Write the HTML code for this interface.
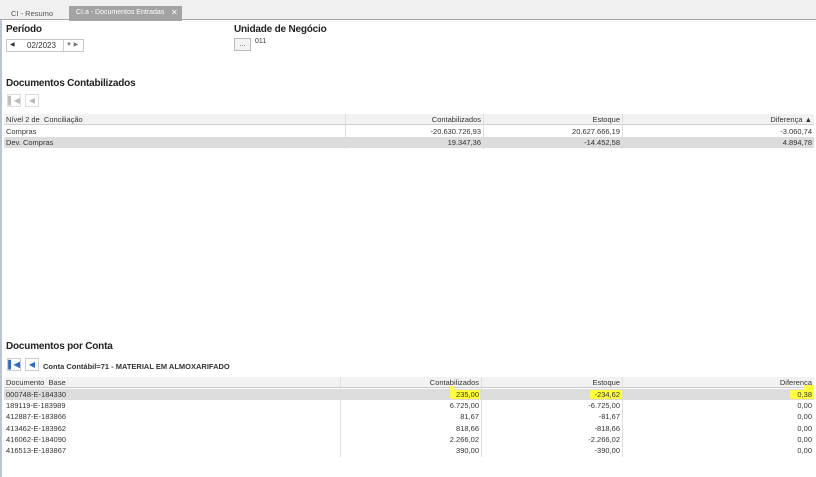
<!DOCTYPE html>
<html><head><style>
*{margin:0;padding:0;box-sizing:border-box}
body{width:816px;height:477px;background:#fff;font-family:"Liberation Sans",sans-serif;position:relative;overflow:hidden;color:#333}
.a{position:absolute}
.tabbar{left:0;top:0;width:816px;height:20px;background:#f0f0f0;border-bottom:1px solid #a8a8a8}
.t{font-size:8px;white-space:nowrap}
.h{font-size:10px;font-weight:bold;color:#222;letter-spacing:-0.2px}
.g{font-size:7.5px;color:#333;white-space:nowrap}
.row{position:absolute;height:11px;line-height:11px}
.r{text-align:right;position:absolute}
.hl{background:#ffff3a}
</style></head><body>
<div class="a tabbar"></div>
<div class="a t" style="left:11px;top:9px;color:#555;font-size:7.5px">CI - Resumo</div>
<div class="a" style="left:69px;top:6px;width:113px;height:15px;background:#a3a3a3"></div>
<div class="a t" style="left:76px;top:9px;color:#fff;font-size:7px">CI.a - Documentos Entradas</div>
<div class="a t" style="left:171px;top:8px;color:#fff;font-size:8px">&#10005;</div>
<div class="a" style="left:0;top:20px;width:2px;height:457px;background:#b9c6d8"></div>

<div class="a h" style="left:6px;top:24px">Período</div>
<div class="a" style="left:6px;top:39px;width:78px;height:13px;border:1px solid #c8c8c8"></div>
<div class="a t" style="left:10px;top:41px;font-size:6px">&#9664;</div>
<div class="a t" style="left:27px;top:41px">02/2023</div>
<div class="a" style="left:63px;top:40px;width:1px;height:11px;background:#ccc"></div>
<div class="a t" style="left:66px;top:41px;font-size:6px;color:#777">&#9660; &#9654;</div>

<div class="a h" style="left:234px;top:24px">Unidade de Negócio</div>
<div class="a" style="left:234px;top:38px;width:17px;height:13px;border:1px solid #bbb;background:#f3f3f3;font-size:7px;text-align:center;line-height:11px">...</div>
<div class="a t" style="left:255px;top:38px;font-size:7px">011</div>

<div class="a h" style="left:6px;top:78px">Documentos Contabilizados</div>
<div class="a" style="left:7px;top:94px;width:14px;height:13px;border:1px solid #ddd;color:#bbb;font-size:8px;text-align:center;line-height:11px">&#9612;&#9664;</div>
<div class="a" style="left:25px;top:94px;width:14px;height:13px;border:1px solid #ddd;color:#bbb;font-size:8px;text-align:center;line-height:11px">&#9664;</div>

<div class="row" style="left:4px;top:114px;width:810px;background:#f2f2f2;border-bottom:1px solid #d0d0d0"></div>
<div class="a" style="left:345px;top:114px;width:1px;height:35px;background:#ddd"></div>
<div class="a" style="left:483px;top:114px;width:1px;height:35px;background:#ddd"></div>
<div class="a" style="left:622px;top:114px;width:1px;height:35px;background:#ddd"></div>
<div class="row g" style="left:6px;top:114px">Nível 2 de &nbsp;Conciliação</div>
<div class="r g" style="right:335px;top:115px">Contabilizados</div>
<div class="r g" style="right:196px;top:115px">Estoque</div>
<div class="r g" style="right:4px;top:115px">Diferença &#9650;</div>
<div class="row g" style="left:6px;top:126px">Compras</div>
<div class="r g" style="right:335px;top:127px">-20.630.726,93</div>
<div class="r g" style="right:196px;top:127px">20.627.666,19</div>
<div class="r g" style="right:4px;top:127px">-3.060,74</div>
<div class="row" style="left:4px;top:137px;width:810px;height:11px;background:#dcdcdc"></div>
<div class="row g" style="left:6px;top:137px">Dev. Compras</div>
<div class="r g" style="right:335px;top:138px">19.347,36</div>
<div class="r g" style="right:196px;top:138px">-14.452,58</div>
<div class="r g" style="right:4px;top:138px">4.894,78</div>

<div class="a h" style="left:6px;top:341px">Documentos por Conta</div>
<div class="a" style="left:7px;top:358px;width:14px;height:13px;border:1px solid #ccc;color:#2a6cc0;font-size:8px;text-align:center;line-height:11px;font-weight:bold">&#9612;&#9664;</div>
<div class="a" style="left:25px;top:358px;width:14px;height:13px;border:1px solid #ccc;color:#2a6cc0;font-size:8px;text-align:center;line-height:11px">&#9664;</div>
<div class="a" style="left:43px;top:362px;font-size:7.5px;font-weight:bold;color:#333">Conta Contábil=71 - MATERIAL EM ALMOXARIFADO</div>

<div class="row" style="left:4px;top:377px;width:810px;background:#f2f2f2;border-bottom:1px solid #c8c8c8"></div>
<div class="a" style="left:340px;top:377px;width:1px;height:80px;background:#ddd"></div>
<div class="a" style="left:481px;top:377px;width:1px;height:80px;background:#ddd"></div>
<div class="a" style="left:622px;top:377px;width:1px;height:80px;background:#ddd"></div>
<div class="row g" style="left:6px;top:377px">Documento &nbsp;Base</div>
<div class="r g" style="right:337px;top:378px">Contabilizados</div>
<div class="r g" style="right:196px;top:378px">Estoque</div>
<div class="r g" style="right:4px;top:378px">Diferença</div>
<div class="row" style="left:4px;top:389px;width:810px;height:11px;background:#dcdcdc"></div>
<div class="a hl" style="left:451px;top:390px;width:29px;height:9px"></div>
<div class="a hl" style="left:450px;top:386px;width:4px;height:12px"></div>
<div class="a hl" style="left:590px;top:390px;width:32px;height:9px"></div>
<div class="a hl" style="left:790px;top:390px;width:24px;height:9px"></div>
<div class="a hl" style="left:804px;top:385px;width:10px;height:6px"></div>

<div class="row g" style="left:6px;top:389px">000748-E-184330</div>
<div class="r g" style="right:337px;top:390px">235,00</div>
<div class="r g" style="right:196px;top:390px">-234,62</div>
<div class="r g" style="right:4px;top:390px">0,38</div>
<div class="row g" style="left:6px;top:400px">189119-E-183989</div>
<div class="r g" style="right:337px;top:401px">6.725,00</div>
<div class="r g" style="right:196px;top:401px">-6.725,00</div>
<div class="r g" style="right:4px;top:401px">0,00</div>
<div class="row g" style="left:6px;top:411px">412887-E-183866</div>
<div class="r g" style="right:337px;top:412px">81,67</div>
<div class="r g" style="right:196px;top:412px">-81,67</div>
<div class="r g" style="right:4px;top:412px">0,00</div>
<div class="row g" style="left:6px;top:423px">413462-E-183962</div>
<div class="r g" style="right:337px;top:424px">818,66</div>
<div class="r g" style="right:196px;top:424px">-818,66</div>
<div class="r g" style="right:4px;top:424px">0,00</div>
<div class="row g" style="left:6px;top:434px">416062-E-184090</div>
<div class="r g" style="right:337px;top:435px">2.266,02</div>
<div class="r g" style="right:196px;top:435px">-2.266,02</div>
<div class="r g" style="right:4px;top:435px">0,00</div>
<div class="row g" style="left:6px;top:445px">416513-E-183867</div>
<div class="r g" style="right:337px;top:446px">390,00</div>
<div class="r g" style="right:196px;top:446px">-390,00</div>
<div class="r g" style="right:4px;top:446px">0,00</div>
</body></html>
